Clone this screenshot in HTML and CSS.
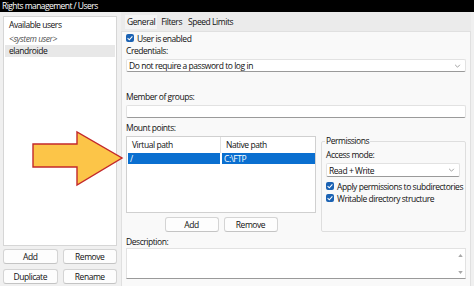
FILE: index.html
```html
<!DOCTYPE html>
<html lang="en">

<head>
    <meta charset="utf-8">
    <title>Rights management / Users</title>
    <link rel="stylesheet" href="styles.css">
</head>

<body>
    <div class="titlebar">Rights management / Users</div>

    <div class="window">
        <aside class="users">
            <div class="user-list">
                <div class="list-head">Available users</div>
                <div class="user system">&lt;system user&gt;</div>
                <div class="user selected">elandroide</div>
            </div>
            <div class="btn-grid">
                <button>Add</button>
                <button>Remove</button>
                <button>Duplicate</button>
                <button>Rename</button>
            </div>
        </aside>

        <section class="settings">
            <nav class="tabs">
                <span class="tab active">General</span>
                <span class="tab">Filters</span>
                <span class="tab">Speed Limits</span>
            </nav>

            <div class="panel">
                <label class="check first">
                    <span class="box"><svg viewBox="0 0 8 8"><path d="M1.6 4.2 L3.3 5.8 L6.4 2.3" /></svg></span>
                    User is enabled
                </label>

                <div class="label">Credentials:</div>
                <div class="select">
                    <span>Do not require a password to log in</span>
                    <svg class="chev" viewBox="0 0 8 5"><path d="M1 1 L4 4 L7 1" /></svg>
                </div>

                <div class="label groups">Member of groups:</div>
                <div class="input"></div>

                <div class="label mount">Mount points:</div>
                <div class="mount-row">
                    <div class="mount-left">
                        <div class="paths">
                            <div class="paths-head">
                                <span>Virtual path</span>
                                <span>Native path</span>
                            </div>
                            <div class="paths-row">
                                <span>/</span>
                                <span>C:\FTP</span>
                            </div>
                        </div>
                        <div class="mount-buttons">
                            <button>Add</button>
                            <button>Remove</button>
                        </div>
                    </div>

                    <fieldset class="perms">
                        <legend>Permissions</legend>
                        <div class="label access">Access mode:</div>
                        <div class="select small">
                            <span>Read + Write</span>
                            <svg class="chev" viewBox="0 0 8 5"><path d="M1 1 L4 4 L7 1" /></svg>
                        </div>
                        <label class="check row">
                            <span class="box"><svg viewBox="0 0 8 8"><path d="M1.6 4.2 L3.3 5.8 L6.4 2.3" /></svg></span>
                            Apply permissions to subdirectories
                        </label>
                        <label class="check row">
                            <span class="box"><svg viewBox="0 0 8 8"><path d="M1.6 4.2 L3.3 5.8 L6.4 2.3" /></svg></span>
                            Writable directory structure
                        </label>
                    </fieldset>
                </div>

                <div class="label desc">Description:</div>
                <div class="textarea">
                    <div class="scroll">
                        <svg viewBox="0 0 6 4"><path d="M0 4 L3 0 L6 4 Z" /></svg>
                        <svg viewBox="0 0 6 4"><path d="M0 0 L6 0 L3 4 Z" /></svg>
                    </div>
                </div>
            </div>
        </section>
    </div>

    <!-- big callout arrow pointing at the mount point -->
    <svg class="arrow" width="474" height="286" viewBox="0 0 474 286">
        <polygon points="33,144 77,144 77,132 122,158 77,185 77,167 33,167" />
    </svg>
</body>

</html>
```

FILE: styles.css
```css
body {
    margin: 0;
    padding: 0;
    width: 474px;
    height: 286px;
    overflow: hidden;
    background-color: #f0f0f0;
    font-family: 'Open Sans', 'Noto Sans', sans-serif;
    font-size: 8.5px;
    letter-spacing: -0.45px;
    color: #111;
}

.titlebar {
    height: 12px;
    line-height: 12px;
    padding-left: 2px;
    background-color: #000;
    color: #fff;
    font-size: 8.5px;
    letter-spacing: -0.55px;
}

.window {
    display: flex;
    height: 274px;
}

/* left column */

.users {
    flex: none;
    width: 121px;
    box-sizing: border-box;
    padding: 4px 4px 2px 3px;
    display: flex;
    flex-direction: column;
}

.user-list {
    flex: 1;
    background-color: #fff;
    border: 1px solid #d6d6d6;
    padding: 1px 1px;
}

.list-head {
    line-height: 13px;
    padding-left: 4px;
    margin-bottom: 2px;
}

.user {
    line-height: 12px;
    padding-left: 4px;
}

.system {
    font-style: italic;
    color: #555;
}

.selected {
    background-color: #e8e8e8;
}

.btn-grid {
    display: grid;
    grid-template-columns: 1fr 1fr;
    gap: 5px;
    margin-top: 3px;
}

button {
    height: 15px;
    padding: 0;
    font-family: inherit;
    font-size: 8.5px;
    letter-spacing: -0.45px;
    color: #111;
    background-color: #fdfdfd;
    border: 1px solid #d4d4d4;
    border-bottom-color: #c4c4c4;
    border-radius: 3px;
}

/* right column */

.settings {
    flex: 1;
    min-width: 0;
    display: flex;
    flex-direction: column;
    padding-right: 3px;
}

.tabs {
    height: 19px;
    display: flex;
    align-items: center;
    gap: 2px;
    padding-left: 4px;
    background-color: #ebebeb;
}

.tab {
    padding: 0 2px;
    line-height: 14px;
}

.tab.active {
    background-color: #f4f4f4;
}

.panel {
    flex: 1;
    background-color: #f9f9f9;
    border: 1px solid #e0e0e0;
    border-bottom: none;
    padding: 0 4px;
    display: flex;
    flex-direction: column;
}

.check {
    display: flex;
    align-items: center;
    gap: 3px;
    height: 10px;
    white-space: nowrap;
}

.check.first {
    margin-top: 1px;
}

.check.row {
    height: 12px;
}

.box {
    flex: none;
    width: 8px;
    height: 8px;
    border-radius: 2px;
    background-color: #1b62b3;
    display: flex;
}

.box svg {
    width: 8px;
    height: 8px;
    fill: none;
    stroke: #fff;
    stroke-width: 1.1;
}

.label {
    line-height: 12px;
    margin-top: 2px;
}

.label.groups {
    margin-top: 19px;
}

.label.mount {
    margin-top: 4px;
}

.label.desc {
    margin-top: 4px;
}

.select,
.input {
    height: 13px;
    box-sizing: border-box;
    margin-top: 2px;
    background-color: #fff;
    border: 1px solid #e2e2e2;
    border-bottom-color: #9a9a9a;
    border-radius: 2px;
    display: flex;
    align-items: center;
    justify-content: space-between;
    padding: 0 4px 0 2px;
}

.chev {
    width: 7px;
    height: 4px;
    fill: none;
    stroke: #8a8a8a;
    stroke-width: 1;
}

.mount-row {
    display: flex;
    gap: 5px;
    margin-top: 2px;
}

.mount-left {
    flex: none;
    width: 190px;
    display: flex;
    flex-direction: column;
}

.paths {
    height: 77px;
    box-sizing: border-box;
    background-color: #fff;
    border: 1px solid #d0d0d0;
    padding: 0 1px;
}

.paths-head,
.paths-row {
    display: grid;
    grid-template-columns: 92px 93px;
    column-gap: 2px;
}

.paths-head {
    height: 16px;
    line-height: 16px;
}

.paths-head span {
    padding-left: 4px;
}

.paths-head span + span {
    border-left: 1px solid #e0e0e0;
    margin-left: -2px;
    padding-left: 5px;
}

.paths-row {
    height: 11px;
    line-height: 11px;
    color: #fff;
}

.paths-row span {
    background-color: #0a6fd0;
    padding-left: 2px;
}

.mount-buttons {
    display: flex;
    justify-content: center;
    gap: 5px;
    margin-top: 4px;
}

.mount-buttons button {
    width: 54px;
}

.perms {
    flex: 1;
    min-width: 0;
    margin: 0;
    padding: 0 5px 7px 4px;
    border: 1px solid #dedede;
    border-radius: 2px;
}

.perms legend {
    padding: 0 1px;
    margin-left: -1px;
    line-height: 10px;
}

.label.access {
    margin-top: 3px;
}

.select.small {
    height: 14px;
    margin-bottom: 3px;
}

.textarea {
    height: 31px;
    box-sizing: border-box;
    background-color: #fff;
    border: 1px solid #e2e2e2;
    border-bottom-color: #9a9a9a;
    display: flex;
    justify-content: flex-end;
}

.scroll {
    width: 10px;
    display: flex;
    flex-direction: column;
    justify-content: space-between;
    align-items: center;
    padding: 5px 0 4px;
}

.scroll svg {
    width: 5px;
    height: 3px;
    fill: #a8a8a8;
}

.arrow {
    position: absolute;
    left: 0;
    top: 0;
    pointer-events: none;
}

.arrow polygon {
    fill: #fcc548;
    stroke: #c3282a;
    stroke-width: 1.4;
    stroke-linejoin: miter;
}
```
